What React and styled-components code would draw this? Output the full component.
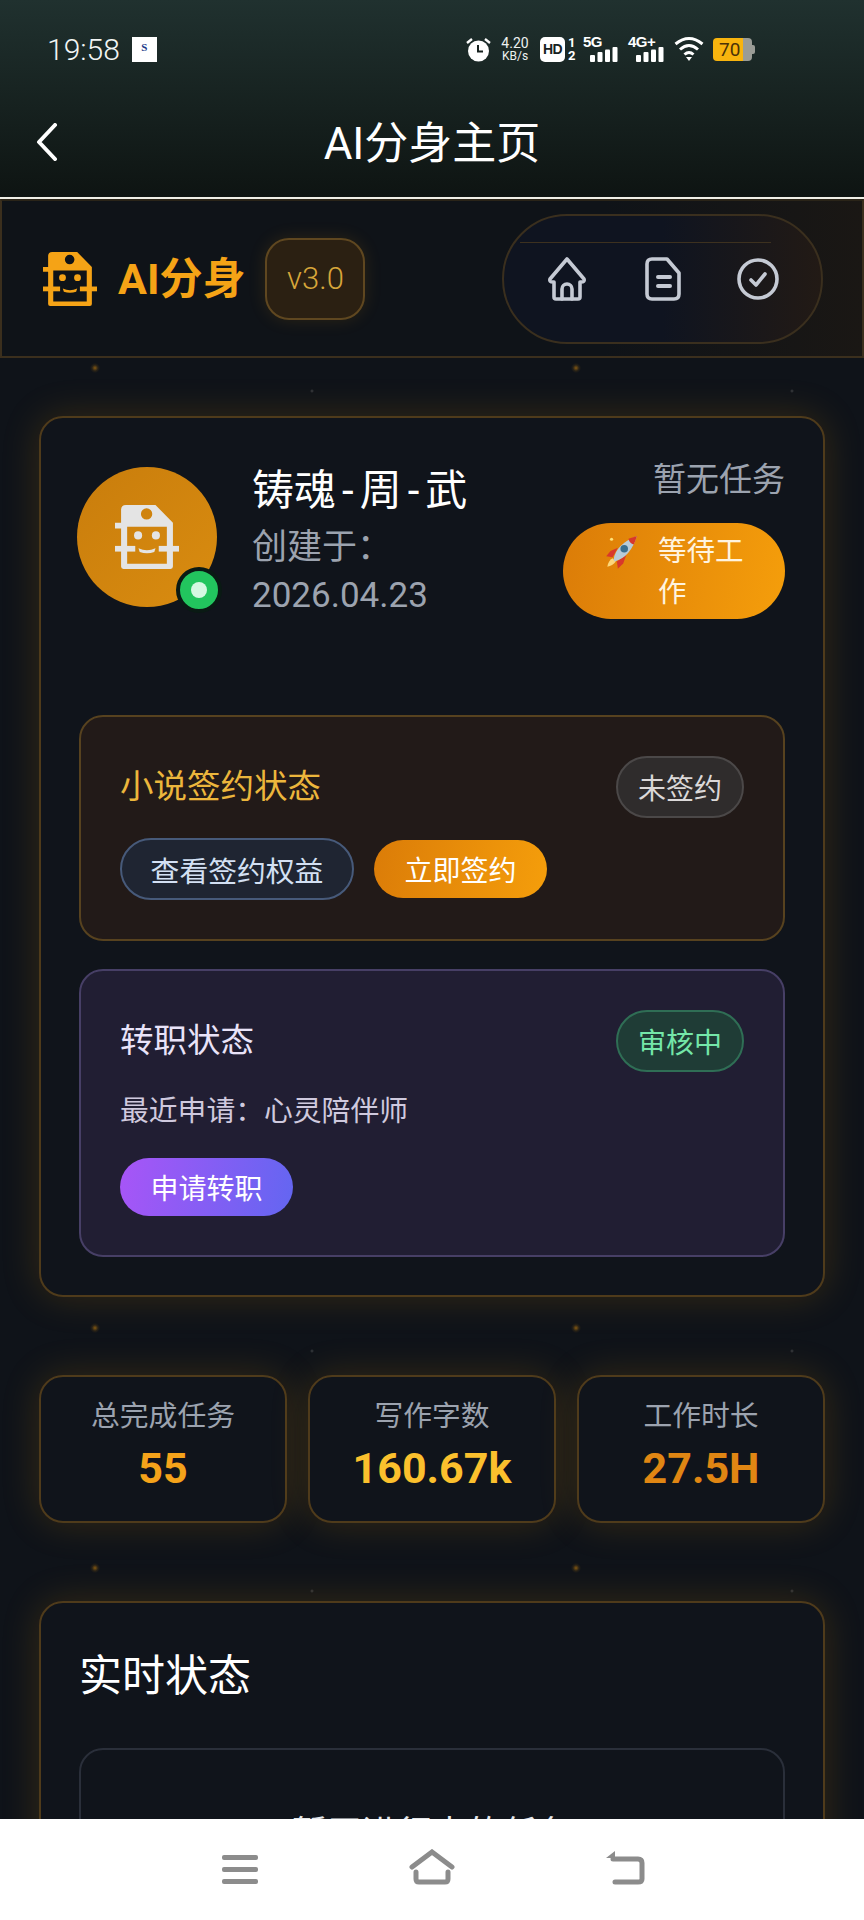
import styled, { createGlobalStyle } from "styled-components";

const GlobalStyle = createGlobalStyle`
  html, body {
    margin: 0;
    padding: 0;
    background: #0f1319;
    font-family: Roboto, "Noto Sans CJK SC", sans-serif;
  }
  * { box-sizing: border-box; }
`;

const Screen = styled.div`
  width: 864px;
  height: 1920px;
  display: flex;
  flex-direction: column;
  overflow: hidden;
  background: #0f1319;
`;

const TopArea = styled.div`
  height: 199px;
  flex: none;
  padding: 0 0 0 36px;
  border-bottom: 2px solid #efeee6;
  background: linear-gradient(#20312f, #0e1412);
  color: #fff;
`;

const StatusBar = styled.div`
  height: 98px;
  padding: 36px 109px 0 11px;
  display: flex;
  align-items: flex-start;
`;

const Time = styled.span`
  font-size: 30px;
  line-height: 27px;
  font-weight: 300;
  color: #f2f5f4;
`;

const NotifyIcon = styled.div`
  width: 25px;
  height: 25px;
  margin: 1px 0 0 12px;
  background: #fff;
  color: #1e3a8a;
  font: 700 11px/21px "Liberation Serif", serif;
  text-align: center;
`;

const StatusIcons = styled.div`
  margin-left: auto;
  display: flex;
  align-items: center;
  height: 26px;
`;

const Speed = styled.div`
  margin: 0 10px 0 9px;
  width: 30px;
  text-align: center;
  font-size: 14px;
  line-height: 14px;
  color: #eef1f0;
  white-space: nowrap;
  small {
    display: block;
    font-size: 12px;
    line-height: 12px;
  }
`;

const HdBox = styled.div`
  width: 25px;
  height: 25px;
  border-radius: 5px;
  background: #fff;
  color: #16211f;
  font: 700 14px/25px "Liberation Sans", sans-serif;
  letter-spacing: -0.5px;
  text-align: center;
`;

const SimNumbers = styled.div`
  width: 7px;
  margin: 0 8px 0 3px;
  font: 700 13px/13px Roboto, sans-serif;
  text-align: center;
`;

const Signal = styled.div`
  position: relative;
  width: ${(p) => p.$w}px;
  height: 26px;
  margin-right: ${(p) => p.$gap}px;
  span {
    position: absolute;
    left: 0;
    top: -2px;
    font: 700 15px/15px "Liberation Sans", sans-serif;
    letter-spacing: -0.5px;
  }
  svg {
    position: absolute;
    right: 0;
    bottom: 0;
  }
`;

const Battery = styled.div`
  display: flex;
  align-items: center;
  width: 42px;
  height: 23px;
  margin-left: 9px;
  b {
    width: 30px;
    height: 100%;
    border-radius: 4px 0 0 4px;
    background: #f8b40e;
    color: #4a3208;
    font: 400 19px/23px Roboto, sans-serif;
    padding-left: 6px;
    white-space: nowrap;
  }
  i {
    width: 9px;
    height: 100%;
    border-radius: 0 4px 4px 0;
    background: #9a9c96;
  }
  u {
    width: 3px;
    height: 9px;
    border-radius: 0 2px 2px 0;
    background: #9a9c96;
  }
`;

const TitleRow = styled.div`
  position: relative;
  height: 99px;
  display: flex;
  align-items: center;
  padding-bottom: 12px;
`;

const PageTitle = styled.h1`
  position: absolute;
  left: -36px;
  right: 0;
  top: 22px;
  margin: 0;
  text-align: center;
  font-size: 44px;
  line-height: 48px;
  font-weight: 400;
  color: #fff;
`;

const AppHeader = styled.header`
  height: 159px;
  flex: none;
  display: flex;
  align-items: center;
  padding: 0 40px 0 41px;
  background: linear-gradient(90deg, #0f1318 70%, #1a1714);
  border: 2px solid #3b2f1d;
  border-top-color: #2a2418;
`;

const BrandIcon = styled.div`
  width: 54px;
  height: 54px;
  color: #f5a316;
`;

const BrandName = styled.span`
  margin-left: 21px;
  font-size: 43px;
  line-height: 54px;
  font-weight: 700;
  color: #f5a316;
`;

const Version = styled.span`
  margin-left: 20px;
  width: 100px;
  height: 82px;
  display: flex;
  align-items: center;
  justify-content: center;
  border: 2px solid #5f4720;
  border-radius: 24px;
  background: #2b2012;
  box-shadow: 0 0 18px rgba(245, 158, 11, 0.12);
  font-size: 31px;
  font-weight: 300;
  color: #d7a63a;
`;

const NavPill = styled.nav`
  position: relative;
  margin-left: auto;
  width: 321px;
  height: 130px;
  margin-right: -1px;
  display: flex;
  align-items: center;
  justify-content: space-between;
  padding: 0 42px 0 42px;
  border: 2px solid #3a2f1e;
  border-radius: 65px;
  background: linear-gradient(90deg, #0f1420 50%, #221a15);
  &::before {
    content: "";
    position: absolute;
    left: 16px;
    right: 50px;
    top: 26px;
    height: 1px;
    background: #3d311f;
  }
`;

const Content = styled.main`
  flex: 1;
  min-height: 0;
  overflow: hidden;
  padding: 58px 39px 0;
  display: flex;
  flex-direction: column;
  gap: 78px;
  background-color: #0f1319;
  background-image:
    radial-gradient(circle at 95px 10px, rgba(245, 158, 11, 0.5) 0, rgba(245, 158, 11, 0.1) 3px, transparent 5px),
    radial-gradient(circle at 576px 10px, rgba(245, 158, 11, 0.5) 0, rgba(245, 158, 11, 0.1) 3px, transparent 5px),
    radial-gradient(circle at 312px 33px, rgba(200, 200, 200, 0.25) 0, transparent 2px),
    radial-gradient(circle at 792px 33px, rgba(200, 200, 200, 0.25) 0, transparent 2px);
  background-size: 864px 240px;
`;

const Card = styled.section`
  flex: none;
  border: 2px solid #4f3b1b;
  border-radius: 24px;
  background: #10141b;
  box-shadow: 0 0 38px rgba(245, 158, 11, 0.17);
`;

const ProfileCard = styled(Card)`
  height: 881px;
  padding: 49px 38px 0;
`;

const ProfileRow = styled.div`
  display: flex;
  height: 248px;
`;

const Avatar = styled.div`
  position: relative;
  width: 140px;
  height: 140px;
  margin-left: -2px;
  flex: none;
  display: flex;
  align-items: center;
  justify-content: center;
  border-radius: 50%;
  background: linear-gradient(135deg, #c97d0c, #d98c10);
  color: #e4e4e4;
`;

const OnlineDot = styled.span`
  position: absolute;
  right: -5px;
  bottom: -6px;
  width: 46px;
  height: 46px;
  display: flex;
  align-items: center;
  justify-content: center;
  border-radius: 50%;
  background: #22c55e;
  border: 4px solid #0a1a14;
  &::after {
    content: "";
    width: 16px;
    height: 16px;
    border-radius: 50%;
    background: #d5f8e2;
  }
`;

const Identity = styled.div`
  margin-left: 35px;
  width: 240px;
`;

const Name = styled.div`
  margin-top: -4px;
  font-size: 42px;
  line-height: 56px;
  color: #fff;
  white-space: nowrap;
`;

const NameDash = styled.span`
  margin: 0 6px;
`;

const Created = styled.div`
  margin-top: 5px;
  font-size: 35px;
  line-height: 48px;
  color: #9ca3af;
`;

const TaskSide = styled.div`
  margin-left: auto;
  width: 222px;
  display: flex;
  flex-direction: column;
  align-items: flex-end;
`;

const TaskText = styled.div`
  margin-top: -10px;
  font-size: 33px;
  line-height: 46px;
  color: #9ca3af;
`;

const WaitButton = styled.button`
  margin-top: 20px;
  width: 222px;
  height: 96px;
  border: 0;
  padding: 8px 26px 0 38px;
  display: flex;
  align-items: flex-start;
  gap: 19px;
  border-radius: 48px;
  background: linear-gradient(100deg, #db7c08, #f59e0b);
  color: #fff4e0;
  font-family: inherit;
  font-size: 28.5px;
  line-height: 41px;
  text-align: left;
`;

const RocketWrap = styled.span`
  flex: none;
  width: 38px;
  height: 38px;
  margin-top: 3px;
`;

const Panel = styled.div`
  border-radius: 24px;
  border: 2px solid ${(p) => p.$border};
  background: ${(p) => p.$bg};
  padding: 40px 39px 0 39px;
  height: ${(p) => p.$h}px;
  margin-bottom: ${(p) => p.$after || 0}px;
`;

const PanelHead = styled.div`
  display: flex;
  align-items: center;
  justify-content: space-between;
  height: 62px;
  margin-top: -1px;
`;

const PanelTitle = styled.h3`
  margin: 0;
  font-size: 33.5px;
  font-weight: 400;
  line-height: 44px;
  color: ${(p) => p.$color};
`;

const Badge = styled.span`
  width: 128px;
  height: 62px;
  display: flex;
  align-items: center;
  justify-content: center;
  border-radius: 31px;
  border: 2px solid ${(p) => p.$border};
  background: ${(p) => p.$bg};
  color: ${(p) => p.$color};
  font-size: 28px;
`;

const ButtonRow = styled.div`
  display: flex;
  align-items: center;
  gap: 20px;
  margin-top: 20px;
`;

const GhostButton = styled.button`
  width: 234px;
  height: 62px;
  border-radius: 31px;
  border: 2px solid #475a7a;
  background: #1f2532;
  color: #d3e0f3;
  font-family: inherit;
  font-size: 28.8px;
  padding: 0;
`;

const FillButton = styled.button`
  width: 173px;
  height: 58px;
  border: 0;
  border-radius: 29px;
  background: ${(p) => p.$bg};
  color: #fff;
  font-family: inherit;
  font-size: 28px;
  padding: 0;
  margin-top: ${(p) => p.$top || 0}px;
`;

const RecentLine = styled.div`
  margin-top: 17px;
  font-size: 28.8px;
  line-height: 44px;
  color: #cfc9de;
`;

const StatsRow = styled.div`
  flex: none;
  display: grid;
  grid-template-columns: repeat(3, 248px);
  justify-content: space-between;
`;

const StatCard = styled(Card)`
  height: 148px;
  padding-top: 20px;
  text-align: center;
`;

const StatLabel = styled.div`
  font-size: 28.8px;
  line-height: 38px;
  color: #9ca3af;
`;

const StatValue = styled.div`
  margin-top: 8px;
  font-size: 43px;
  line-height: 50px;
  font-weight: 700;
  color: ${(p) => p.$color};
`;

const LiveCard = styled(Card)`
  padding: 48px 38px 0;
  height: 400px;
`;

const LiveTitle = styled.h2`
  margin: 0;
  font-size: 43px;
  line-height: 50px;
  font-weight: 400;
  color: #fff;
`;

const LiveInner = styled.div`
  margin-top: 47px;
  height: 300px;
  border: 2px solid #2a2f3a;
  border-radius: 24px;
  padding-top: 63px;
  text-align: center;
  font-size: 35px;
  line-height: 44px;
  color: #e5e7eb;
`;

const BottomBar = styled.div`
  position: relative;
  height: 101px;
  flex: none;
  background: #fff;
`;

const BarIcon = styled.svg`
  position: absolute;
  left: ${(p) => p.$x}px;
  top: ${(p) => p.$y}px;
`;

const RobotIcon = ({ size }) => (
  <svg width={size} height={size} viewBox="0 0 158 158" fill="currentColor">
    <path
      fillRule="evenodd"
      d="M27 0h73l43 44v108q0 6-6 6H21q-6 0-6-6V58H0V44h15V12Q15 0 27 0zM92 22a14 14 0 1 0-28 0a14 14 0 0 0 28 0zM30 54v91h98V54z"
    />
    <circle cx="57" cy="75" r="10" />
    <circle cx="101" cy="75" r="10" />
    <rect x="0" y="101" width="50" height="14" />
    <rect x="108" y="101" width="50" height="14" />
    <path d="M58 107q21 10 42 0l-3 9q-18 6-36 0z" />
  </svg>
);

const Rocket = () => (
  <svg width="38" height="38" viewBox="0 0 36 36">
    <path d="M6 31q1-6 5-8l3 3q-3 4-8 5z" fill="#fcd67a" />
    <path d="M9 16l7-3-5 9-6-1z" fill="#d8382b" />
    <path d="M21 28l3-8-9 6 1 7z" fill="#d8382b" />
    <path d="M12 24Q14 10 34 2Q28 22 13 26z" fill="#b8cbd8" />
    <path d="M26 4.5L34 2Q33 6 31 10Q27 9 26 4.5z" fill="#d8382b" />
    <circle cx="22" cy="14" r="3.6" fill="#3a6f8f" />
    <circle cx="10" cy="5" r="1.5" fill="#ffe27a" />
  </svg>
);

const HomeIcon = () => (
  <svg width="42" height="44" viewBox="0 0 42 44" fill="none" stroke="#c5cad4" strokeWidth="3.6" strokeLinejoin="round" strokeLinecap="round">
    <path d="M21 2L38 22Q39 25 35 25H34V40Q34 42 32 42H10Q8 42 8 40V25H7Q3 25 4 22Z" />
    <path d="M16 42V32a5 5 0 0 1 10 0V42" />
  </svg>
);

const DocIcon = () => (
  <svg width="36" height="44" viewBox="0 0 36 44" fill="none" stroke="#c5cad4" strokeWidth="3.6" strokeLinejoin="round" strokeLinecap="round">
    <path d="M7 2H22L34 16V37Q34 42 29 42H7Q2 42 2 37V7Q2 2 7 2Z" />
    <path d="M13 20H25M13 29H25" strokeWidth="4" />
  </svg>
);

const CheckIcon = () => (
  <svg width="42" height="44" viewBox="0 0 42 44" fill="none" stroke="#c5cad4" strokeWidth="3.6" strokeLinejoin="round" strokeLinecap="round">
    <circle cx="21" cy="22" r="19" />
    <path d="M14 23L19 28L28 17" />
  </svg>
);

const Bars = () => (
  <svg width="28" height="15" viewBox="0 0 28 15" fill="#fff">
    <rect x="0" y="8" width="5" height="7" rx="1" />
    <rect x="7.5" y="5" width="5" height="10" rx="1" />
    <rect x="15" y="2.5" width="5" height="12.5" rx="1" />
    <rect x="22.5" y="0" width="5" height="15" rx="1" />
  </svg>
);

export default function App() {
  return (
    <Screen>
      <GlobalStyle />
      <TopArea>
        <StatusBar>
          <Time>19:58</Time>
          <NotifyIcon>S</NotifyIcon>
          <StatusIcons>
            <svg width="25" height="25" viewBox="0 0 25 25">
              <circle cx="12.5" cy="14" r="10.5" fill="#fff" />
              <path d="M12 8v6.5h5" fill="none" stroke="#16211f" strokeWidth="2" />
              <path d="M1 6l5-4M24 6l-5-4" stroke="#fff" strokeWidth="2.4" />
            </svg>
            <Speed>
              4.20
              <small>KB/s</small>
            </Speed>
            <HdBox>HD</HdBox>
            <SimNumbers>
              1
              <br />2
            </SimNumbers>
            <Signal $w={35} $gap={10}>
              <span>5G</span>
              <Bars />
            </Signal>
            <Signal $w={36} $gap={10}>
              <span>4G+</span>
              <Bars />
            </Signal>
            <svg width="30" height="26" viewBox="0 0 30 26" fill="none" stroke="#fff" strokeWidth="3">
              <path d="M1.5 8Q15-3 28.5 8" />
              <path d="M6 13.5Q15 5.5 24 13.5" />
              <path d="M10.5 18.5Q15 14.5 19.5 18.5" />
              <path d="M12 21h6l-3 4z" fill="#fff" stroke="none" />
            </svg>
            <Battery>
              <b>70</b>
              <i />
              <u />
            </Battery>
          </StatusIcons>
        </StatusBar>
        <TitleRow>
          <svg width="22" height="38" viewBox="0 0 22 38" fill="none" stroke="#fff" strokeWidth="4" strokeLinecap="round" strokeLinejoin="round">
            <path d="M19 2L3 19L19 36" />
          </svg>
          <PageTitle>AI分身主页</PageTitle>
        </TitleRow>
      </TopArea>

      <AppHeader>
        <BrandIcon>
          <RobotIcon size={54} />
        </BrandIcon>
        <BrandName>AI分身</BrandName>
        <Version>v3.0</Version>
        <NavPill>
          <HomeIcon />
          <DocIcon />
          <CheckIcon />
        </NavPill>
      </AppHeader>

      <Content>
        <ProfileCard>
          <ProfileRow>
            <Avatar>
              <RobotIcon size={64} />
              <OnlineDot />
            </Avatar>
            <Identity>
              <Name>
                铸魂<NameDash>-</NameDash>周<NameDash>-</NameDash>武
              </Name>
              <Created>
                创建于：
                <br />
                2026.04.23
              </Created>
            </Identity>
            <TaskSide>
              <TaskText>暂无任务</TaskText>
              <WaitButton>
                <RocketWrap>
                  <Rocket />
                </RocketWrap>
                <span>等待工作</span>
              </WaitButton>
            </TaskSide>
          </ProfileRow>

          <Panel $bg="#221a18" $border="#57421f" $h={226} $after={28}>
            <PanelHead>
              <PanelTitle $color="#ecb63c">小说签约状态</PanelTitle>
              <Badge $bg="#2f2c2c" $border="#4b4848" $color="#dbd8d8">未签约</Badge>
            </PanelHead>
            <ButtonRow>
              <GhostButton>查看签约权益</GhostButton>
              <FillButton $bg="linear-gradient(100deg, #db7c08, #f59e0b)">立即签约</FillButton>
            </ButtonRow>
          </Panel>

          <Panel $bg="#211e33" $border="#473f66" $h={288}>
            <PanelHead>
              <PanelTitle $color="#e9e3f9">转职状态</PanelTitle>
              <Badge $bg="#1f3c36" $border="#2f6e55" $color="#74e6a8">审核中</Badge>
            </PanelHead>
            <RecentLine>最近申请：心灵陪伴师</RecentLine>
            <FillButton $top={25} $bg="linear-gradient(100deg, #a855f7, #6366f1)">申请转职</FillButton>
          </Panel>
        </ProfileCard>

        <StatsRow>
          <StatCard>
            <StatLabel>总完成任务</StatLabel>
            <StatValue $color="#f5a31a">55</StatValue>
          </StatCard>
          <StatCard>
            <StatLabel>写作字数</StatLabel>
            <StatValue $color="#fbc02d">160.67k</StatValue>
          </StatCard>
          <StatCard>
            <StatLabel>工作时长</StatLabel>
            <StatValue $color="#e08613">27.5H</StatValue>
          </StatCard>
        </StatsRow>

        <LiveCard>
          <LiveTitle>实时状态</LiveTitle>
          <LiveInner>暂无进行中的任务</LiveInner>
        </LiveCard>
      </Content>

      <BottomBar>
        <BarIcon $x={222} $y={36} width="36" height="29" viewBox="0 0 36 29" fill="#8c8c8c">
          <rect width="36" height="5" rx="2" />
          <rect y="12" width="36" height="5" rx="2" />
          <rect y="24" width="36" height="5" rx="2" />
        </BarIcon>
        <BarIcon $x={409} $y={30} width="46" height="36" viewBox="0 0 46 36" fill="none" stroke="#8c8c8c" strokeWidth="5" strokeLinecap="round" strokeLinejoin="round">
          <path d="M3 18L23 3L43 18" strokeLinejoin="miter" />
          <path d="M7 23V30Q7 33 10 33H36Q39 33 39 30V23" />
        </BarIcon>
        <BarIcon $x={605} $y={30} width="40" height="36" viewBox="0 0 40 36" fill="none" stroke="#8c8c8c" strokeWidth="5" strokeLinecap="round">
          <path d="M8 10H33Q37 10 37 14V30Q37 33 33 33H10" />
          <path d="M10 2L1 9H10Z" fill="#8c8c8c" stroke="none" />
        </BarIcon>
      </BottomBar>
    </Screen>
  );
}
